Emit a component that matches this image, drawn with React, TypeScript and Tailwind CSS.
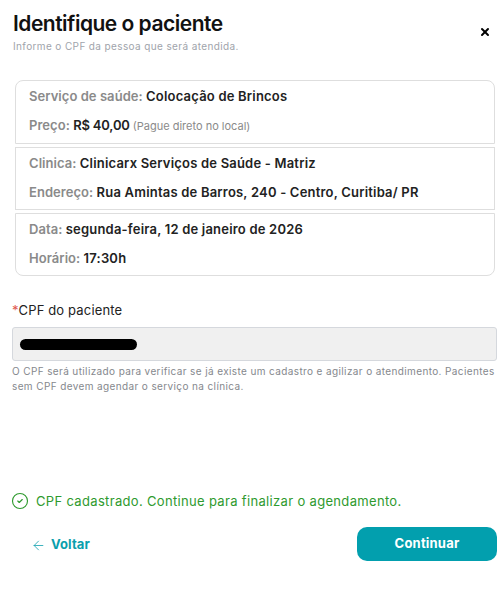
import { ArrowLeft, CircleCheck, X } from 'lucide-react';

const font = { fontFamily: 'Inter, "Noto Sans", sans-serif' };

function Row({ label, value, extra }: { label: string; value: string; extra?: string }) {
  return (
    <p className="text-[13px] leading-[20px] font-semibold text-[#8a8a8a] whitespace-nowrap tracking-[0.05px]">
      {label}{' '}
      <span className={extra ? 'text-[#222222] tracking-[-0.2px]' : 'text-[#222222] tracking-[0.2px]'}>{value}</span>
      {extra && <span className="text-[11px] font-normal text-[#8a8a8a] tracking-normal"> {extra}</span>}
    </p>
  );
}

export default function App() {
  return (
    <div className="w-[503px] h-[598px] bg-white flex flex-col overflow-hidden" style={font}>
      <div className="pl-[13px] pr-[12px] pt-[11px] flex justify-between items-start h-[80px]">
        <div>
          <h1 className="text-[21px] leading-[26px] font-semibold text-[#111111] tracking-[-0.5px]">Identifique o paciente</h1>
          <p className="text-[10px] leading-[14px] mt-[2px] text-[#a0a4ab] tracking-[0.38px]">Informe o CPF da pessoa que será atendida.</p>
        </div>
        <X className="w-[12px] h-[12px] mt-[15px] text-black" strokeWidth={4} />
      </div>

      <div className="ml-[15px] w-[480px] flex flex-col gap-[3px]">
        <div className="h-[64px] border border-[#dedede] rounded-t-[8px] px-[13px] pt-[5px] flex flex-col gap-[9px]">
          <Row label="Serviço de saúde:" value="Colocação de Brincos" />
          <Row label="Preço:" value="R$ 40,00" extra="(Pague direto no local)" />
        </div>
        <div className="h-[63px] border border-[#dedede] px-[13px] pt-[5px] flex flex-col gap-[9px]">
          <Row label="Clinica:" value="Clinicarx Serviços de Saúde - Matriz" />
          <Row label="Endereço:" value="Rua Amintas de Barros, 240 - Centro, Curitiba/ PR" />
        </div>
        <div className="h-[63px] border border-[#dedede] rounded-b-[8px] px-[13px] pt-[5px] flex flex-col gap-[9px]">
          <Row label="Data:" value="segunda-feira, 12 de janeiro de 2026" />
          <Row label="Horário:" value="17:30h" />
        </div>
      </div>

      <div className="pl-[12px] pr-[6px] mt-[25px]">
        <label className="block text-[13px] leading-[18px] text-[#222222] tracking-[0.15px]">
          <span className="text-[#e0574f]">*</span>CPF do paciente
        </label>
        <div className="mt-[8px] h-[34px] bg-[#f0f0f0] border border-[#d5d8dd] rounded-[3px] flex items-center pl-[7px]">
          <div className="w-[117px] h-[11px] rounded-full bg-black" />
        </div>
        <p className="mt-[3px] text-[10px] leading-[15px] text-[#85888d] w-[490px] tracking-[0.38px]">
          O CPF será utilizado para verificar se já existe um cadastro e agilizar o atendimento. Pacientes sem CPF devem agendar o serviço na clínica.
        </p>
      </div>

      <div className="pl-[11px] mt-[98px] flex items-center gap-[7px] text-[13px] leading-[18px] text-[#2e9a2e] tracking-[0.33px]">
        <CircleCheck className="w-[18px] h-[18px]" strokeWidth={1.5} />
        <span>CPF cadastrado. Continue para finalizar o agendamento.</span>
      </div>

      <div className="mt-[17px] pl-[31px] pr-[6px] flex items-center justify-between">
        <button className="flex items-center gap-[5px] text-[13px] font-bold text-[#0a9fad] tracking-[0.1px] pt-[2px]">
          <ArrowLeft className="w-[15px] h-[15px]" strokeWidth={1.25} />
          Voltar
        </button>
        <button className="w-[140px] h-[34px] rounded-[10px] bg-[#029fae] text-white text-[13px] font-bold tracking-[0.2px]">Continuar</button>
      </div>
    </div>
  );
}
